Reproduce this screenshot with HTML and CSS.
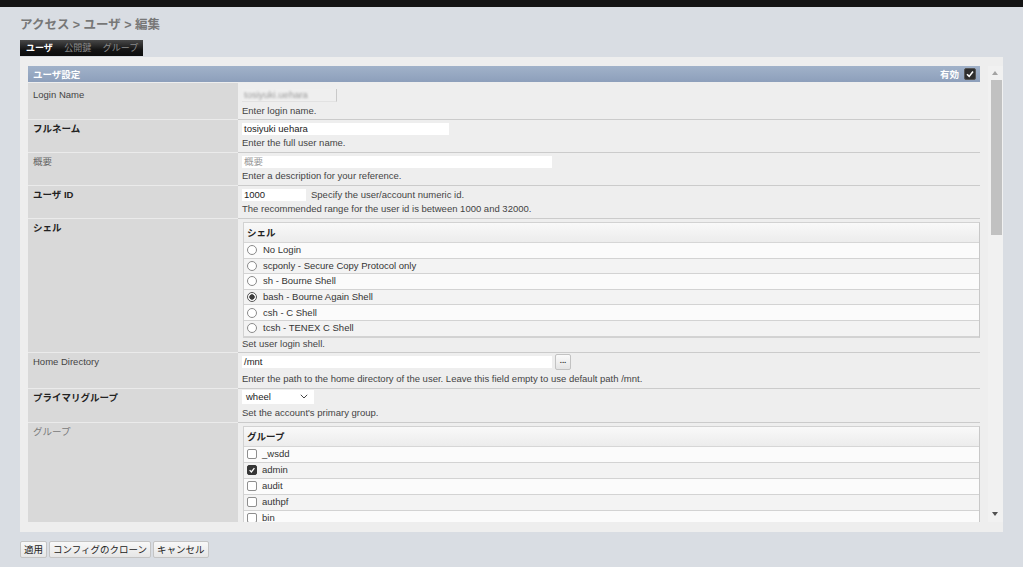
FILE: index.html
```html
<!DOCTYPE html>
<html lang="ja">
<head>
<meta charset="utf-8">
<title>ユーザ編集</title>
<link rel="stylesheet" href="styles.css">
</head>
<body>
<div class="page">
  <div class="topbar"></div>
  <h1 class="crumb">アクセス &gt; ユーザ &gt; 編集</h1>
  <div class="tabs">
    <span class="tab active">ユーザ</span>
    <span class="tab">公開鍵</span>
    <span class="tab">グループ</span>
  </div>
  <div class="panel">
    <div class="content">
      <div class="sechead">
        <span>ユーザ設定</span>
        <span class="enable">有効 <span class="cb cb-dark"><svg viewBox="0 0 10 10" width="10" height="10"><path d="M2 5.2 L4.2 7.4 L8 2.6" fill="none" stroke="#fff" stroke-width="1.6"/></svg></span></span>
      </div>

      <div class="row">
        <div class="lbl pt6">Login Name</div>
        <div class="val pt6">
          <div class="inp inp-ro w95"><span class="blur">tosiyuki.uehara</span></div>
          <div class="help gap3">Enter login name.</div>
        </div>
      </div>

      <div class="row">
        <div class="lbl req">フルネーム</div>
        <div class="val">
          <div class="inp w207">tosiyuki uehara</div>
          <div class="help">Enter the full user name.</div>
        </div>
      </div>

      <div class="row">
        <div class="lbl dim">概要</div>
        <div class="val">
          <div class="inp w310 ph">概要</div>
          <div class="help">Enter a description for your reference.</div>
        </div>
      </div>

      <div class="row">
        <div class="lbl req">ユーザ ID</div>
        <div class="val">
          <div class="line">
            <div class="inp w63">1000</div>
            <span class="inline-help">Specify the user/account numeric id.</span>
          </div>
          <div class="help">The recommended range for the user id is between 1000 and 32000.</div>
        </div>
      </div>

      <div class="row">
        <div class="lbl req">シェル</div>
        <div class="val val-list">
          <div class="list">
            <div class="list-head">シェル</div>
            <div class="item odd"><span class="radio"></span>No Login</div>
            <div class="item even"><span class="radio"></span>scponly - Secure Copy Protocol only</div>
            <div class="item odd"><span class="radio"></span>sh - Bourne Shell</div>
            <div class="item even"><span class="radio on"></span>bash - Bourne Again Shell</div>
            <div class="item odd"><span class="radio"></span>csh - C Shell</div>
            <div class="item even"><span class="radio"></span>tcsh - TENEX C Shell</div>
          </div>
          <div class="help gap0">Set user login shell.</div>
        </div>
      </div>

      <div class="row">
        <div class="lbl pt3">Home Directory</div>
        <div class="val pt1">
          <div class="line h16">
            <div class="inp w310">/mnt</div>
            <span class="dots">...</span>
          </div>
          <div class="help gap3">Enter the path to the home directory of the user. Leave this field empty to use default path /mnt.</div>
        </div>
      </div>

      <div class="row">
        <div class="lbl req pt3">プライマリグループ</div>
        <div class="val pt1">
          <div class="select">wheel<svg class="caret" viewBox="0 0 8 5" width="8" height="5"><path d="M0.8 0.8 L4 4 L7.2 0.8" fill="none" stroke="#444" stroke-width="1"/></svg></div>
          <div class="help gap3">Set the account's primary group.</div>
        </div>
      </div>

      <div class="row last">
        <div class="lbl dim2">グループ</div>
        <div class="val val-list">
          <div class="list groups">
            <div class="list-head">グループ</div>
            <div class="item odd"><span class="cb"></span>_wsdd</div>
            <div class="item even"><span class="cb cb-dark"><svg viewBox="0 0 10 10" width="8" height="8"><path d="M2 5.2 L4.2 7.4 L8 2.6" fill="none" stroke="#fff" stroke-width="1.6"/></svg></span>admin</div>
            <div class="item odd"><span class="cb"></span>audit</div>
            <div class="item even"><span class="cb"></span>authpf</div>
            <div class="item odd"><span class="cb"></span>bin</div>
          </div>
        </div>
      </div>
    </div>
    <div class="scrollbar">
      <span class="arrow up"></span>
      <span class="thumb"></span>
      <span class="arrow down"></span>
    </div>
  </div>
  <div class="buttons">
    <span class="btn">適用</span>
    <span class="btn">コンフィグのクローン</span>
    <span class="btn">キャンセル</span>
  </div>
</div>
</body>
</html>
```

FILE: styles.css
```css
* { box-sizing: border-box; }
html, body { margin: 0; padding: 0; background: #ffffff; }
body {
  font-family: "Liberation Sans", "Noto Sans CJK JP", sans-serif;
  font-size: 9.5px;
  color: #333;
}
.page {
  width: 1023px;
  height: 567px;
  background: #d9dde3;
  overflow: hidden;
}
.topbar { height: 7px; background: #141414; }
.crumb {
  margin: 0;
  padding: 11px 0 0 20px;
  font-size: 12.5px;
  line-height: 14px;
  font-weight: bold;
  color: #777;
}
.tabs {
  margin: 8px 0 0 20px;
  width: 123px;
  height: 16px;
  background: linear-gradient(#484848, #151515 60%, #0c0c0c);
  display: flex;
  align-items: center;
  overflow: hidden;
  white-space: nowrap;
}
.tab { padding: 0 5.5px 0 6px; color: #8a8a8a; font-size: 9px; line-height: 16px; }
.tab.active { color: #fff; font-weight: bold; }

.panel {
  margin: 1px 0 0 20px;
  width: 983px;
  height: 475px;
  background: #eeeeee;
  padding: 9px 0 10px 8px;
  display: flex;
  gap: 8px;
}
.content {
  width: 952px;
  height: 456px;
  overflow: hidden;
  background: #eeeeee;
}
.sechead {
  height: 17px;
  background: linear-gradient(#a1b2c9, #8d9fbb);
  border-bottom: 1px solid #eeeeee;
  display: flex;
  justify-content: space-between;
  align-items: center;
  padding: 0 4px 0 5px;
  color: #fff;
  font-weight: bold;
  font-size: 9.5px;
}
.enable { display: flex; align-items: center; gap: 5px; }

.row { display: flex; }
.lbl {
  width: 210px;
  flex: none;
  background: #d9d9d9;
  border-bottom: 1px solid #ebebeb;
  padding: 3px 5px 0;
  line-height: 12px;
  color: #444;
}
.lbl.req { font-weight: bold; color: #222; }
.lbl.dim { color: #666; }
.lbl.dim2 { color: #7a7a7a; }
.val {
  flex: 1;
  border-bottom: 1px solid #cbcbcb;
  padding: 3px 0 3px 4px;
}
.val.val-list { padding-top: 3px; padding-bottom: 2.4px; }
.row.last .lbl, .row.last .val { border-bottom: 0; }
.pt6 { padding-top: 6px; }
.pt3 { padding-top: 3px; }
.pt2 { padding-top: 2px; }
.val.pt1 { padding-top: 1px; }
.val.pt6 { padding-bottom: 2px; }

.inp {
  height: 12px;
  line-height: 12px;
  background: #fff;
  padding: 0 2px;
  color: #222;
  white-space: nowrap;
  overflow: hidden;
}
.inp.ph { color: #999; }
.inp-ro {
  height: 13px;
  background: #efefef;
  border-right: 1px solid #c9c9c9;
  border-bottom: 1px solid #e2e2e2;
}
.blur { color: #9a9a9a; filter: blur(1px); }
.w95 { width: 95px; }
.w207 { width: 207px; }
.w310 { width: 310px; }
.w63 { width: 64px; }
.help {
  margin-top: 2px;
  line-height: 12px;
  color: #444;
  white-space: nowrap;
}
.gap3 { margin-top: 3px; }
.gap0 { margin-top: 0; }
.line { display: flex; align-items: center; gap: 5px; height: 12px; }
.line.h16 { height: 16px; gap: 3px; }
.inline-help { color: #444; line-height: 12px; }
.dots {
  width: 16px;
  height: 16px;
  border: 1px solid #c2c2c2;
  border-radius: 2px;
  background: linear-gradient(#fafafa, #e4e4e4);
  font-weight: bold;
  font-size: 8px;
  line-height: 12px;
  text-align: center;
  color: #333;
}
.select {
  width: 72px;
  height: 14px;
  background: #fff;
  padding: 0 4px;
  line-height: 14px;
  color: #222;
  display: flex;
  align-items: center;
  justify-content: space-between;
}
.caret { margin-right: 2px; }

.list {
  margin-left: 1px;
  width: 737px;
  border: 1px solid #d2d2d2;
  border-right-color: #c8c8c8;
  background: #fbfbfb;
}
.list-head {
  height: 20px;
  border-bottom: 1px solid #d6d6d6;
  background: linear-gradient(#f9f9f9, #ececec);
  padding: 0 3px;
  line-height: 19px;
  font-weight: bold;
  color: #222;
}
.item {
  height: 15.6px;
  border-bottom: 1px solid #d3d3d3;
  display: flex;
  align-items: center;
  padding-left: 3px;
  color: #333;
  line-height: 12px;
}
.groups .item { height: 16px; }
.item.odd { background: #fbfbfb; }
.item.even { background: #f3f3f3; }
.radio {
  width: 10px;
  height: 10px;
  border: 1px solid #8a8a8a;
  border-radius: 50%;
  background: #fff;
  margin-right: 6px;
  flex: none;
}
.radio.on { background: radial-gradient(circle, #3c3c3c 0, #3c3c3c 2.4px, #fff 3px); border-color: #555; }
.cb {
  width: 10px;
  height: 10px;
  border: 1px solid #8e8e8e;
  border-radius: 2px;
  background: #fff;
  margin-right: 5px;
  flex: none;
  display: flex;
  align-items: center;
  justify-content: center;
}
.cb.cb-dark { background: #363636; border-color: #363636; }
.enable .cb { width: 12px; height: 12px; margin-right: 0; border-color: #555; background: #2e2e2e; }

.scrollbar {
  width: 15px;
  height: 456px;
  background: #f1f1f1;
  position: relative;
  flex: none;
}
.thumb {
  position: absolute;
  left: 3px;
  top: 14px;
  width: 11px;
  height: 155px;
  background: #c1c1c1;
}
.arrow {
  position: absolute;
  left: 4px;
  width: 0;
  height: 0;
  border-left: 3.5px solid transparent;
  border-right: 3.5px solid transparent;
}
.arrow.up { top: 5px; border-bottom: 4px solid #a3a3a3; }
.arrow.down { bottom: 6px; border-top: 4px solid #505050; }

.buttons {
  margin: 9px 0 0 20px;
  display: flex;
  gap: 2px;
}
.btn {
  height: 17px;
  padding: 0 3px;
  border: 1px solid #c4c4c4;
  border-radius: 2px;
  background: linear-gradient(#f8f8f8, #e6e6e6);
  line-height: 15px;
  color: #222;
  font-size: 9.5px;
}
```
